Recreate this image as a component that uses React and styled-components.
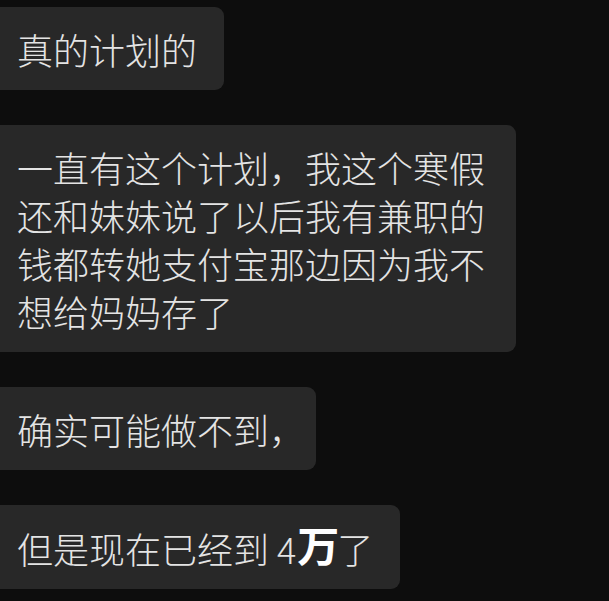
import styled, { createGlobalStyle } from "styled-components";

const GlobalStyle = createGlobalStyle`
  html, body {
    margin: 0;
    padding: 0;
    background: #0d0d0d;
  }
  body {
    font-family: "Noto Sans CJK SC", "Noto Sans", sans-serif;
    overflow: hidden;
  }
`

const messages = [
    {id: 1, lines: ["真的计划的"]},
    {id: 2, wide: true, lines: ["一直有这个计划，我这个寒假", "还和妹妹说了以后我有兼职的", "钱都转她支付宝那边因为我不", "想给妈妈存了"]},
]

const App = () => {
    return <>
        <GlobalStyle/>
        <Chat>
            {messages.map(m => (
                <Bubble key={m.id} $wide={m.wide}>
                    {m.lines.map((line, i) => <Line key={i}>{line}</Line>)}
                </Bubble>
            ))}
            <Bubble>
                <Line>确实可能做不到<Trailing>，</Trailing></Line>
            </Bubble>
            <Bubble>
                <Line>但是现在已经到 4<Marked>万</Marked>了</Line>
            </Bubble>
        </Chat>
    </>
}

const Chat = styled.div`
  width: 609px;
  height: 601px;
  box-sizing: border-box;
  padding-top: 7px;
  display: flex;
  flex-direction: column;
  align-items: flex-start;
  gap: 35px;
`

const Bubble = styled.div`
  margin-left: -12px;
  padding: 17.5px ${p => p.$wide ? "31px" : "27px"} 17.5px 29px;
  background: #282828;
  border-radius: 9px;
  color: #e4e4e4;
  font-size: 36px;
  font-weight: 300;
  line-height: 48px;
`

const Line = styled.div`
  white-space: nowrap;
`

// half-width comma at the end of the line, as the phone lays it out
const Trailing = styled.span`
  margin-right: -16px;
`

const Marked = styled.span`
  display: inline-block;
  font-size: 42px;
  font-weight: 700;
  color: #ffffff;
  line-height: 1;
  vertical-align: 2px;
  margin-left: 1px;
  margin-right: -2px;
`

export default App;
